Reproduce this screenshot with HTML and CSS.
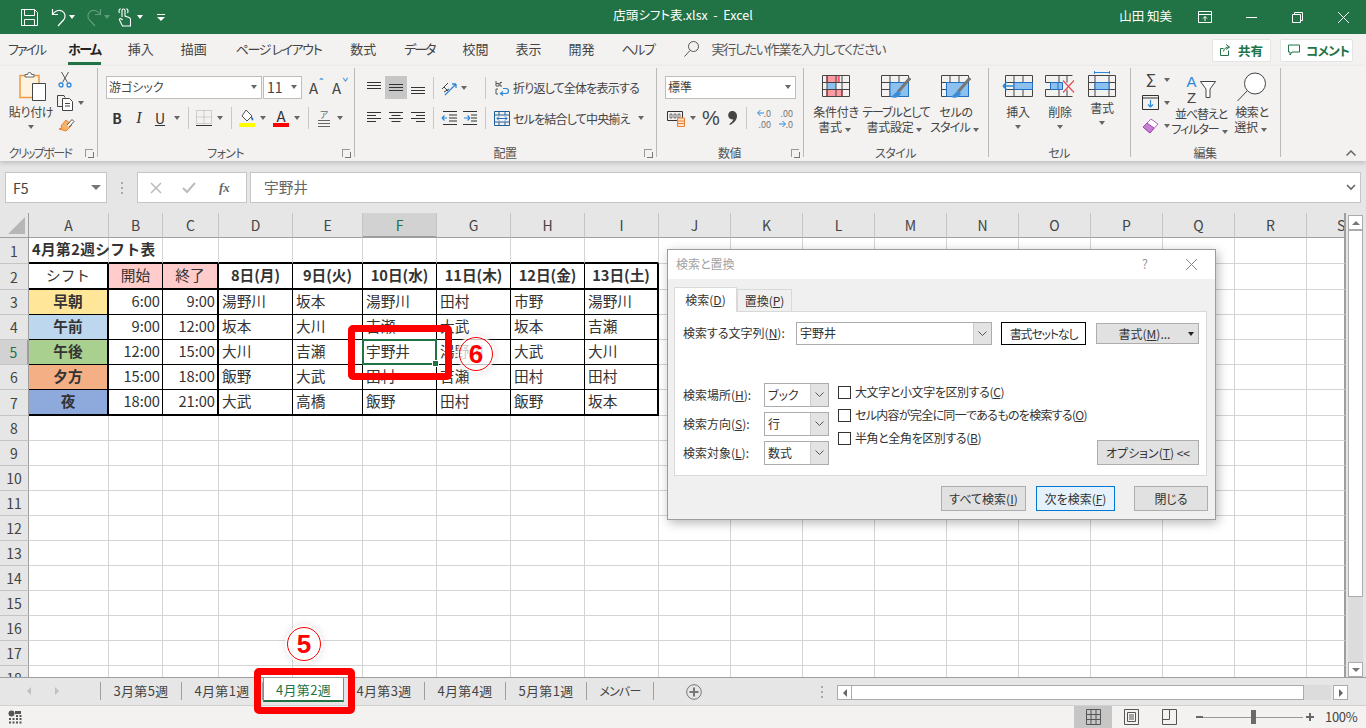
FILE: index.html
```html
<!DOCTYPE html>
<html lang="ja">
<head>
<meta charset="utf-8">
<title>店頭シフト表.xlsx - Excel</title>
<link rel="stylesheet" href="styles.css">
</head>
<body>
<div class="app">

<header class="titlebar">
  <div class="qat">
    <svg class="ic ml-21" width="17" height="18" viewBox="0 0 17 18" fill="none" stroke="#fff"><path d="M.5 1.500h13l3 3v13H.5z"/><path d="M3.500 1.500v6h10v-6M3.500 17.500v-6h10v6"/></svg>
    <svg class="ic ml-13" width="16" height="20" viewBox="0 0 16 20" fill="none" stroke="#fff" stroke-width="1.200"><path d="M1.500 2v5.500H7"/><path d="M1.700 7.300C4 3.700 8 2.500 11 4c3.500 2 4 6 1.500 9L7 19"/></svg>
    <i class="caret white mln-2"></i>
    <svg class="ic ml-7" width="16" height="20" viewBox="0 0 16 20" fill="none" stroke="#5f9c7d" stroke-width="1.200"><path d="M14.500 2v5.500H9"/><path d="M14.300 7.300C12 3.700 8 2.500 5 4c-3.500 2-4 6-1.500 9L9 19"/></svg>
    <i class="caret dim mln-2"></i>
    <svg class="ic ml-4" width="13" height="20" viewBox="0 0 13 20" fill="none" stroke="#fff" stroke-width="1.100"><path d="M4 10V3.500a1.500 1.500 0 0 1 3 0V9l4 1.500c1 .4 1.500 1 1.500 2V19H4.500L1.500 13c-.5-1 1-2 2-1l1 1"/><path d="M1.500 6a3.500 3.500 0 0 1 1-4.500M9.500 6a3.500 3.500 0 0 0-1-4.500"/></svg>
    <i class="caret white ml-2"></i>
    <span class="qat-more ml-10"></span>
  </div>
  <div class="doc-title">店頭シフト表.xlsx&nbsp; - &nbsp;Excel</div>
  <div class="win">
    <span class="user">山田 知美</span>
    <span class="winbtn"><svg width="14" height="12" viewBox="0 0 14 12" fill="none" stroke="#fff"><path d="M.5.500h13v11H.5zM.5 3.500h13M7 10V5.500M5 7.500l2-2 2 2"/></svg></span>
    <span class="winbtn"><svg width="11" height="11" viewBox="0 0 11 11" stroke="#fff"><path d="M0 5.500h11"/></svg></span>
    <span class="winbtn"><svg width="11" height="11" viewBox="0 0 11 11" fill="none" stroke="#fff"><path d="M.5 2.500h8v8h-8zM2.500 2.500v-2h8v8h-2"/></svg></span>
    <span class="winbtn"><svg width="11" height="11" viewBox="0 0 11 11" stroke="#fff"><path d="M0 0l11 11M11 0L0 11"/></svg></span>
  </div>
</header>

<nav class="tabs">
  <span class="kana2 file-t">ファイル</span>
  <span class="tab-on">ホーム</span>
  <span>挿入</span>
  <span>描画</span>
  <span class="page-t">ページ レイアウト</span>
  <span>数式</span>
  <span class="kana2 data-t">データ</span>
  <span>校閲</span>
  <span>表示</span>
  <span>開発</span>
  <span class="kana1">ヘルプ</span>
  <svg class="tell-ic" width="15" height="16" viewBox="0 0 15 16" fill="none" stroke="#555"><circle cx="9.500" cy="5.500" r="5"/><path d="M6 9.500L.5 15.500"/></svg>
  <span class="tell">実行したい作業を入力してください</span>
  <span class="pill pill-share"><svg width="12" height="12" viewBox="0 0 12 12" fill="none" stroke="#217346"><path d="M8.500 6.500v5h-8v-7h3M6 .5l3.500 2.500L6 5.500M9.500 3C6 3 4 4.500 3.500 7.500"/></svg><b>共有</b></span>
  <span class="pill pill-comment"><svg width="12" height="12" viewBox="0 0 12 12" fill="none" stroke="#217346"><path d="M.5 1h11v7H4l-2 3V8H.5z"/></svg><b>コメント</b></span>
</nav>

<section class="ribbon">

  <div class="group g-clip">
    <div class="body row">
      <div class="big w-42 ml-10">
        <svg class="big-ic paste-ic" width="30" height="30" viewBox="0 0 30 30"><path d="M2 3.500h19v22H2z" fill="#fff3e0" stroke="#ed9a3f" stroke-width="1.500"/><path d="M7 5V2.500h2.500a2 2 0 0 1 4 0H16V5z" fill="#fff" stroke="#666"/><path d="M14.500 11.500h13v17h-13z" fill="#fff" stroke="#444"/></svg>
        <span class="lbl">貼り付け</span>
        <i class="caret"></i>
      </div>
      <div class="col-tools">
        <svg class="tool" width="14" height="17" viewBox="0 0 14 17" fill="none"><path d="M3.500 1l6 10.500M10.500 1l-6 10.500" stroke="#555"/><circle cx="3" cy="14" r="2" stroke="#2b88d8" stroke-width="1.300"/><circle cx="11" cy="14" r="2" stroke="#2b88d8" stroke-width="1.300"/></svg>
        <div class="row"><svg width="17" height="16" viewBox="0 0 17 16" fill="none" stroke="#444"><path d="M5 11.500H.5V.5H7l1 2"/><path d="M5.500 3.500h7l3 3v9h-10z" fill="#fff"/><path d="M8 8.500h5M8 11h5"/></svg><i class="caret"></i></div>
        <svg class="tool" width="17" height="16" viewBox="0 0 17 16"><path d="M8 2l6 5-1 1-5 5-7-2 3-1-1-2z" fill="#f5b26b" stroke="#ed7d31"/><path d="M9 7l5-5.500 2 2L11 9" fill="#fff" stroke="#555"/></svg>
      </div>
    </div>
    <div class="glabel clip-l">クリップボード<i class="launch"></i></div>
  </div>

  <div class="group g-font">
    <div class="body">
      <div class="row r1">
        <span class="box w-156">游ゴシック<i class="caret end"></i></span>
        <span class="box w-39 ml-1 size">11<i class="caret end"></i></span>
        <span class="growA ml-7">A<small>ˆ</small></span>
        <span class="growA ml-9">A<small class="blue">ˇ</small></span>
      </div>
      <div class="row r2">
        <b class="fmt w-22">B</b><em class="fmt w-22">I</em><u class="fmt w-20">U</u><i class="caret"></i>
        <i class="sep ml-4"></i>
        <svg class="ml-7" width="16" height="16" viewBox="0 0 16 16" fill="none"><path d="M.5.500h15v13H.5zM8 .5v13M.5 7h15" stroke="#aaa" stroke-dasharray="1 1"/><path d="M0 15.500h16" stroke="#333"/></svg><i class="caret ml-1"></i>
        <i class="sep ml-4"></i>
        <svg class="ml-7" width="16" height="18" viewBox="0 0 16 18"><path d="M7 1l6 6-5 5-5-5z" fill="#fff" stroke="#555"/><path d="M12 7c1.500 1 3 3 2 4.500-1.500 0-2-2-2-4.500z" fill="#1f6fc4"/><rect y="14" width="16" height="4" fill="#ff0"/></svg><i class="caret ml-1"></i>
        <span class="colorA ml-3">A</span><i class="caret ml-1"></i>
        <i class="sep ml-4"></i>
        <span class="phon ml-7">ア<i></i></span><i class="caret ml-1"></i>
      </div>
    </div>
    <div class="glabel">フォント<i class="launch"></i></div>
  </div>

  <div class="group g-align">
    <div class="body">
      <div class="row r1">
        <span class="ab w-22"><svg width="14" height="14" viewBox="0 0 14 14" stroke="#333"><path d="M0 1.500h14M0 4.500h14M0 7.500h14"/></svg></span>
        <span class="ab w-22 on"><svg width="14" height="14" viewBox="0 0 14 14" stroke="#333"><path d="M0 3.500h14M0 6.500h14M0 9.500h14"/></svg></span>
        <span class="ab w-22"><svg width="14" height="14" viewBox="0 0 14 14" stroke="#333"><path d="M0 6.500h14M0 9.500h14M0 12.500h14"/></svg></span>
        <i class="sep ml-4"></i>
        <svg class="ml-7" width="16" height="16" viewBox="0 0 16 16" fill="none"><path d="M1 9l6-6M3 12l5-3M3 7l4 4" stroke="#444"/><path d="M4 15L15 4M15 4h-4M15 4v4" stroke="#2b88d8" stroke-width="1.300"/></svg><i class="caret"></i>
        <i class="sep ml-14"></i>
        <svg class="ml-9" width="16" height="16" viewBox="0 0 16 16" fill="none"><path d="M8 8.500h3a2.500 2.500 0 0 1 0 5H6M8 11.500l-2.500 2 2.500 2" stroke="#2b88d8" stroke-width="1.200"/><path d="M1 1v5M1 3.500h3v2.500H1M7 2.500H5v3.500h2M3 9H1v5h2" stroke="#555"/></svg>
        <span class="lbl ml-2 tight">折り返して全体を表示する</span>
      </div>
      <div class="row r2">
        <span class="ab w-22"><svg width="14" height="12" viewBox="0 0 14 12" stroke="#333"><path d="M0 .5h14M0 3.500h9M0 6.500h14M0 9.500h9"/></svg></span>
        <span class="ab w-22"><svg width="14" height="12" viewBox="0 0 14 12" stroke="#333"><path d="M0 .5h14M2.500 3.500h9M0 6.500h14M2.500 9.500h9"/></svg></span>
        <span class="ab w-22"><svg width="14" height="12" viewBox="0 0 14 12" stroke="#333"><path d="M0 .5h14M5 3.500h9M0 6.500h14M5 9.500h9"/></svg></span>
        <i class="sep ml-4"></i>
        <svg class="ml-7" width="16" height="14" viewBox="0 0 16 14" fill="none"><path d="M2 .5h14M8 4h8M8 7h8M8 10h8M2 13.500h14" stroke="#333"/><path d="M1 7h5M1 7l2.500-2.500M1 7l2.500 2.500" stroke="#2b88d8" stroke-width="1.200"/></svg>
        <svg class="ml-6" width="16" height="14" viewBox="0 0 16 14" fill="none"><path d="M0 .5h14M8 4h6M8 7h6M8 10h6M0 13.500h14" stroke="#333"/><path d="M7 7H1M7 7L4.500 4.500M7 7L4.500 9.500" stroke="#2b88d8" stroke-width="1.200"/></svg>
        <i class="sep ml-6"></i>
        <svg class="ml-8" width="16" height="15" viewBox="0 0 16 15" fill="none"><path d="M.5.500h15v14H.5zM.5 4h15M.5 11h15M5 .5V4M11 .5V4M5 11v3.500M11 11v3.500" stroke="#1f5f99"/><path d="M3 7.500h10M3 7.500l2-2M3 7.500l2 2M13 7.500l-2-2M13 7.500l-2 2" stroke="#1f6fc4"/></svg>
        <span class="lbl ml-3 tight">セルを結合して中央揃え</span><i class="caret ml-4"></i>
      </div>
    </div>
    <div class="glabel">配置<i class="launch"></i></div>
  </div>

  <div class="group g-num">
    <div class="body">
      <div class="row r1"><span class="box w-131">標準<i class="caret end"></i></span></div>
      <div class="row r2">
        <svg class="ml-2" width="19" height="17" viewBox="0 0 19 17" fill="none"><path d="M.5 1.500h15v9H.5z" stroke="#333"/><path d="M3 4h2v4H3zM7 4h2v4H7zM11 4h2v4h-2z" stroke="#555" stroke-width=".8"/><path d="M10.500 8h7v8.500h-7z" fill="#fce4cc" stroke="#ed7d31"/><path d="M10.500 11h7M10.500 13.500h7" stroke="#ed7d31"/></svg><i class="caret"></i>
        <span class="pct ml-2">%</span>
        <svg class="ml-8" width="9" height="14" viewBox="0 0 9 14" fill="#444"><path d="M4 0c3 0 5 2 5 5 0 4-3 7-7 9l-.6-.9C3.500 11.500 5 10 5.300 8.300 2.500 8.800.2 7 .2 4.300.2 1.800 2 0 4 0z"/></svg>
        <i class="sep ml-9"></i>
        <span class="decs ml-8"><svg width="7" height="8" viewBox="0 0 7 8" fill="none" stroke="#2b88d8"><path d="M7 4H1M3.500 1L.5 4l3 3"/></svg><small>.0</small><br><small>.00</small></span>
        <span class="decs ml-6"><small>.00</small><br><svg width="7" height="8" viewBox="0 0 7 8" fill="none" stroke="#2b88d8"><path d="M0 4h6M3.500 1l3 3-3 3"/></svg><small>.0</small></span>
      </div>
    </div>
    <div class="glabel">数値<i class="launch"></i></div>
  </div>

  <div class="group g-style">
    <div class="body row">
      <div class="big w-60">
        <svg class="big-ic" width="28" height="22" viewBox="0 0 28 22" fill="none"><path d="M5 .5h12v7H5zM5 14.500h15v7H5z" fill="#ff9aa2" stroke="#e81123"/><path d="M5 7.500h9v7H5z" fill="#8cc0ee"/><path d="M.5.500h27v21H.5zM.5 7.500h27M.5 14.500h27M5 .5v21M14 .5v21M20 .5v21" stroke="#444"/></svg>
        <span class="lbl">条件付き</span><span class="lbl">書式<i class="caret in"></i></span>
      </div>
      <div class="big w-60">
        <svg class="big-ic" width="30" height="26" viewBox="0 0 30 26" fill="none"><path d="M.5.500h27v21H.5zM.5 7.500h27M.5 14.500h27M9 .5v21M18 .5v21" stroke="#444"/><path d="M9 7.500h18.500v14H9z" fill="#8cc0ee" stroke="#1f6fc4"/><path d="M29 3L17 17" stroke="#777" stroke-width="3"/><path d="M17 16c-3 1-4 4-7 6 4 2 9 0 10-4z" fill="#3c8dd6"/></svg>
        <span class="lbl tighter">テーブルとして</span><span class="lbl">書式設定<i class="caret in"></i></span>
      </div>
      <div class="big w-60">
        <svg class="big-ic" width="30" height="26" viewBox="0 0 30 26" fill="none"><path d="M.5.500h27v21H.5z" stroke="#444"/><path d="M.5 7.500h5M.5 14.500h5M9 .5v7M18 .5v7" stroke="#444"/><path d="M5.500 7.500h22v14h-22z" fill="#8cc0ee" stroke="#1f6fc4"/><path d="M29 3L17 17" stroke="#777" stroke-width="3"/><path d="M17 16c-3 1-4 4-7 6 4 2 9 0 10-4z" fill="#3c8dd6"/></svg>
        <span class="lbl">セルの</span><span class="lbl tight">スタイル<i class="caret in"></i></span>
      </div>
    </div>
    <div class="glabel">スタイル</div>
  </div>

  <div class="group g-cells">
    <div class="body row">
      <div class="big w-42">
        <svg class="big-ic" width="32" height="22" viewBox="0 0 32 22" fill="none"><path d="M3.500.500h27v21h-27zM3.500 7.500h27M3.500 14.500h27M12 .5v21M21 .5v21" stroke="#444"/><path d="M12 7.500h18.500v7H12z" fill="#8cc0ee" stroke="#1f6fc4"/><path d="M1 11h10M1 11l4-4M1 11l4 4" stroke="#2b88d8" stroke-width="1.500"/></svg>
        <span class="lbl">挿入</span><i class="caret"></i>
      </div>
      <div class="big w-42">
        <svg class="big-ic" width="30" height="22" viewBox="0 0 30 22" fill="none"><path d="M.5.500h27M.5 21.500h27M.5.500v7M.5 14.500v7M.5 7.500h5M.5 14.500h5M14 .5v7M14 14.500v7M22 .5v7M22 14.500v7" stroke="#444"/><path d="M5.500 7.500h12v7h-12zM13 7.500v7" fill="#8cc0ee" stroke="#1f6fc4"/><path d="M18 5.500l11 12M29 5.500l-11 12" stroke="#e8505b" stroke-width="1.200"/></svg>
        <span class="lbl">削除</span><i class="caret"></i>
      </div>
      <div class="big w-42">
        <svg class="big-ic fmt-ic" width="28" height="26" viewBox="0 0 28 26" fill="none"><path d="M6.500 1.500h15M6.500 0v3M21.500 0v3" stroke="#2b88d8"/><path d="M.5 4.500h27v21H.5zM.5 11.500h27M.5 18.500h27M7 4.500v21M21 4.500v21" stroke="#444"/><path d="M7 11.500h14v7H7z" fill="#8cc0ee" stroke="#1f6fc4"/></svg>
        <span class="lbl">書式</span><i class="caret"></i>
      </div>
    </div>
    <div class="glabel">セル</div>
  </div>

  <div class="group g-edit">
    <div class="body row">
      <div class="edit-col">
        <div class="row ed"><span class="sigma">Σ</span><i class="caret"></i></div>
        <div class="row ed"><svg width="18" height="15" viewBox="0 0 18 15" fill="none"><path d="M.5.500h16v14H.5zM.5 3h16" stroke="#333"/><path d="M8.500 5v7M6 9.500l2.500 2.500L11 9.500" stroke="#2b88d8" stroke-width="1.200"/></svg><i class="caret"></i></div>
        <div class="row ed"><svg width="18" height="16" viewBox="0 0 18 16"><path d="M1 9l8-8 7 5-8 9z" fill="#fff" stroke="#b565c6"/><path d="M1 9l4-4 7 5-4 5z" fill="#c77fd3" stroke="#a648b5"/></svg><i class="caret"></i></div>
      </div>
      <div class="big w-54">
        <div class="az"><span class="az-l"><b>A</b><b>Z</b></span><svg width="16" height="17" viewBox="0 0 16 17" fill="#fff" stroke="#444"><path d="M.5.500h15L10 8v8.500H6V8z"/></svg></div>
        <span class="lbl tighter">並べ替えと</span><span class="lbl tighter">フィルター<i class="caret in"></i></span>
      </div>
      <div class="big w-48">
        <svg class="big-ic" width="30" height="30" viewBox="0 0 30 30" fill="none" stroke="#444"><circle cx="18" cy="11.500" r="10.500" fill="#fff"/><path d="M10 19L.5 29"/></svg>
        <span class="lbl">検索と</span><span class="lbl">選択<i class="caret in"></i></span>
      </div>
    </div>
    <div class="glabel">編集</div>
  </div>

  <svg class="collapse" width="10" height="6" viewBox="0 0 10 6" fill="none" stroke="#666" stroke-width="1.500"><path d="M.5 5.500L5 1l4.500 4.500"/></svg>
</section>

<section class="fbar">
  <div class="namebox">F5<i class="caret dark"></i></div>
  <span class="vdots"></span>
  <div class="fxbox">
    <svg width="12" height="12" viewBox="0 0 12 12" stroke="#bbb" stroke-width="1.500"><path d="M1 1l10 10M11 1L1 11"/></svg>
    <svg width="14" height="12" viewBox="0 0 14 12" fill="none" stroke="#bbb" stroke-width="2"><path d="M1 6l4 4 8-9"/></svg>
    <em class="fx">fx</em>
  </div>
  <div class="finput"><span class="ftext">宇野井</span><svg class="fexpand" width="10" height="7" viewBox="0 0 10 7" fill="none" stroke="#666" stroke-width="1.600"><path d="M1 1l4 4 4-4"/></svg></div>
</section>

<section class="sheetwrap">
  <div class="sheet-clip">
  <table class="sheet">
    <colgroup>
      <col class="c29"><col class="c80"><col class="c54"><col class="c56"><col class="c74"><col class="c70"><col class="c74"><col class="c74"><col class="c74"><col class="c74"><col class="c72"><col class="c72"><col class="c72"><col class="c72"><col class="c72"><col class="c72"><col class="c72"><col class="c72"><col class="c72"><col class="c39">
    </colgroup>
    <tr class="hrow"><th class="corner"><i></i></th><th>A</th><th>B</th><th>C</th><th>D</th><th>E</th><th class="hsel">F</th><th>G</th><th>H</th><th>I</th><th>J</th><th>K</th><th>L</th><th>M</th><th>N</th><th>O</th><th>P</th><th>Q</th><th>R</th><th class="clip">S</th></tr>
    <tr class="h26"><th>1</th><td class="tt tb"><span class="over">4月第2週シフト表</span></td><td class="tb"></td><td class="tb"></td><td class="tb"></td><td class="tb"></td><td class="tb"></td><td class="tb"></td><td class="tb"></td><td class="tb"></td><td></td><td></td><td></td><td></td><td></td><td></td><td></td><td></td><td></td><td></td></tr>
    <tr class="h26"><th>2</th><td class="ctr k tb tr wide">シフト</td><td class="ctr k tb pink">開始</td><td class="ctr k tb tr pink">終了</td><td class="ctr b tb k">8日(月)</td><td class="ctr b tb k">9日(火)</td><td class="ctr b tb k">10日(水)</td><td class="ctr b tb k">11日(木)</td><td class="ctr b tb k">12日(金)</td><td class="ctr b tb tr">13日(土)</td><td></td><td></td><td></td><td></td><td></td><td></td><td></td><td></td><td></td><td></td></tr>
    <tr><th>3</th><td class="ctr b k tr s1">早朝</td><td class="num k">6:00</td><td class="num k tr">9:00</td><td class="k">湯野川</td><td class="k">坂本</td><td class="k">湯野川</td><td class="k">田村</td><td class="k">市野</td><td class="k tr">湯野川</td><td></td><td></td><td></td><td></td><td></td><td></td><td></td><td></td><td></td><td></td></tr>
    <tr><th>4</th><td class="ctr b k tr s2">午前</td><td class="num k">9:00</td><td class="num k tr">12:00</td><td class="k">坂本</td><td class="k">大川</td><td class="k">吉瀬</td><td class="k">大武</td><td class="k">坂本</td><td class="k tr">吉瀬</td><td></td><td></td><td></td><td></td><td></td><td></td><td></td><td></td><td></td><td></td></tr>
    <tr><th class="hsel-r">5</th><td class="ctr b k tr s3">午後</td><td class="num k">12:00</td><td class="num k tr">15:00</td><td class="k">大川</td><td class="k">吉瀬</td><td class="k selcell">宇野井<span class="sel"><i></i></span></td><td class="k">湯野川</td><td class="k">大武</td><td class="k tr">大川</td><td></td><td></td><td></td><td></td><td></td><td></td><td></td><td></td><td></td><td></td></tr>
    <tr><th>6</th><td class="ctr b k tr s4">夕方</td><td class="num k">15:00</td><td class="num k tr">18:00</td><td class="k">飯野</td><td class="k">大武</td><td class="k">田村</td><td class="k">吉瀬</td><td class="k">田村</td><td class="k tr">田村</td><td></td><td></td><td></td><td></td><td></td><td></td><td></td><td></td><td></td><td></td></tr>
    <tr class="h26"><th>7</th><td class="ctr b tb tr k s5">夜</td><td class="num tb k">18:00</td><td class="num tb tr">21:00</td><td class="tb k">大武</td><td class="tb k">高橋</td><td class="tb k">飯野</td><td class="tb k">田村</td><td class="tb k">飯野</td><td class="tb tr">坂本</td><td></td><td></td><td></td><td></td><td></td><td></td><td></td><td></td><td></td><td></td></tr>
    <tr><th>8</th><td></td><td></td><td></td><td></td><td></td><td></td><td></td><td></td><td></td><td></td><td></td><td></td><td></td><td></td><td></td><td></td><td></td><td></td><td></td></tr>
    <tr><th>9</th><td></td><td></td><td></td><td></td><td></td><td></td><td></td><td></td><td></td><td></td><td></td><td></td><td></td><td></td><td></td><td></td><td></td><td></td><td></td></tr>
    <tr><th>10</th><td></td><td></td><td></td><td></td><td></td><td></td><td></td><td></td><td></td><td></td><td></td><td></td><td></td><td></td><td></td><td></td><td></td><td></td><td></td></tr>
    <tr><th>11</th><td></td><td></td><td></td><td></td><td></td><td></td><td></td><td></td><td></td><td></td><td></td><td></td><td></td><td></td><td></td><td></td><td></td><td></td><td></td></tr>
    <tr><th>12</th><td></td><td></td><td></td><td></td><td></td><td></td><td></td><td></td><td></td><td></td><td></td><td></td><td></td><td></td><td></td><td></td><td></td><td></td><td></td></tr>
    <tr><th>13</th><td></td><td></td><td></td><td></td><td></td><td></td><td></td><td></td><td></td><td></td><td></td><td></td><td></td><td></td><td></td><td></td><td></td><td></td><td></td></tr>
    <tr><th>14</th><td></td><td></td><td></td><td></td><td></td><td></td><td></td><td></td><td></td><td></td><td></td><td></td><td></td><td></td><td></td><td></td><td></td><td></td><td></td></tr>
    <tr><th>15</th><td></td><td></td><td></td><td></td><td></td><td></td><td></td><td></td><td></td><td></td><td></td><td></td><td></td><td></td><td></td><td></td><td></td><td></td><td></td></tr>
    <tr><th>16</th><td></td><td></td><td></td><td></td><td></td><td></td><td></td><td></td><td></td><td></td><td></td><td></td><td></td><td></td><td></td><td></td><td></td><td></td><td></td></tr>
    <tr><th>17</th><td></td><td></td><td></td><td></td><td></td><td></td><td></td><td></td><td></td><td></td><td></td><td></td><td></td><td></td><td></td><td></td><td></td><td></td><td></td></tr>
    <tr><th>18</th><td></td><td></td><td></td><td></td><td></td><td></td><td></td><td></td><td></td><td></td><td></td><td></td><td></td><td></td><td></td><td></td><td></td><td></td><td></td></tr>
  </table>
  </div>
  <div class="vscroll">
    <span class="sbtn"><i class="tri-up"></i></span>
    <span class="vthumb"></span>
    <span class="vtrack"></span>
    <span class="sbtn"><i class="tri-down"></i></span>
  </div>
</section>

<section class="tabbar">
  <div class="nav"><i class="tri-l"></i><i class="tri-r"></i></div>
  <span class="stab">3月第5週</span>
  <span class="stab">4月第1週</span>
  <span class="stab active">4月第2週</span>
  <span class="stab">4月第3週</span>
  <span class="stab">4月第4週</span>
  <span class="stab">5月第1週</span>
  <span class="stab w-67">メンバー</span>
  <svg class="addsheet" width="16" height="16" viewBox="0 0 16 16" fill="none" stroke="#777"><circle cx="8" cy="8" r="7.300"/><path d="M8 3.500v9M3.500 8h9" stroke-width="2"/></svg>
  <span class="vdots hd"></span>
  <div class="hscroll">
    <span class="sbtn-h"><i class="tri-l dk"></i></span>
    <span class="hthumb"></span>
    <span class="htrack"></span>
    <span class="sbtn-h"><i class="tri-r dk"></i></span>
  </div>
</section>

<footer class="status">
  <svg class="macro" width="14" height="14" viewBox="0 0 14 14"><circle cx="3.500" cy="3.500" r="3" fill="#555"/><path d="M7 1h6v3H7z" fill="#555"/><path d="M1 8h2v2H1zM4.500 8h2v2h-2zM8 8h2v2H8zM11.500 8h2v2h-2zM1 11.500h2v2H1zM4.500 11.500h2v2h-2zM8 11.500h2v2H8zM11.500 11.500h2v2h-2zM8 5h2v2H8zM11.500 5h2v2h-2z" fill="#555"/></svg>
  <div class="views">
    <span class="vbtn on"><svg width="15" height="16" viewBox="0 0 15 16" fill="none" stroke="#555"><path d="M.5.500h14v15H.5zM5 .5v15M10 .5v15M.5 5.500h14M.5 10.500h14"/></svg></span>
    <span class="vbtn"><svg width="15" height="16" viewBox="0 0 15 16" fill="none" stroke="#555"><path d="M.5.500h14v15H.5zM3.500 3.500h8v9h-8zM5 6h5M5 8h5M5 10h5"/></svg></span>
    <span class="vbtn"><svg width="15" height="16" viewBox="0 0 15 16" fill="none" stroke="#555"><path d="M.5.500h14v15H.5zM.5 10.500h7V.5"/></svg></span>
  </div>
  <div class="zoom">
    <i class="zminus"></i>
    <span class="ztrack"><i class="zthumb"></i></span>
    <i class="zplus"></i>
    <span class="zpct">100%</span>
  </div>
</footer>

<div class="dialog">
  <div class="d-title"><span>検索と置換</span><span class="d-help">?</span><svg class="d-close" width="11" height="11" viewBox="0 0 11 11" stroke="#888"><path d="M0 0l11 11M11 0L0 11"/></svg></div>
  <div class="d-tabs">
    <span class="d-tab on">検索(<u>D</u>)</span>
    <span class="d-tab">置換(<u>P</u>)</span>
  </div>
  <div class="d-panel">
    <div class="row d-find">
      <label class="l-113">検索する文字列(<u>N</u>):</label>
      <span class="combo w-196"><span class="combo-t">宇野井</span><i class="combo-a"><svg width="9" height="6" viewBox="0 0 9 6" fill="none" stroke="#555"><path d="M.5.500l4 4 4-4"/></svg></i></span>
      <span class="nofmt ml-9">書式セットなし</span>
      <span class="btn fmtbtn ml-10">書式(<u>M</u>)...<i class="caret black"></i></span>
    </div>
    <div class="row d-opts">
      <div class="d-sels">
        <div class="row d-sel"><label class="l-81">検索場所(<u>H</u>):</label><span class="combo w-65"><span class="combo-t">ブック</span><i class="combo-a"><svg width="9" height="6" viewBox="0 0 9 6" fill="none" stroke="#555"><path d="M.5.500l4 4 4-4"/></svg></i></span></div>
        <div class="row d-sel"><label class="l-81">検索方向(<u>S</u>):</label><span class="combo w-65"><span class="combo-t">行</span><i class="combo-a"><svg width="9" height="6" viewBox="0 0 9 6" fill="none" stroke="#555"><path d="M.5.500l4 4 4-4"/></svg></i></span></div>
        <div class="row d-sel"><label class="l-81">検索対象(<u>L</u>):</label><span class="combo w-65"><span class="combo-t">数式</span><i class="combo-a"><svg width="9" height="6" viewBox="0 0 9 6" fill="none" stroke="#555"><path d="M.5.500l4 4 4-4"/></svg></i></span></div>
      </div>
      <div class="d-checks">
        <div class="row chk"><i class="cb"></i><span class="chk-t c1">大文字と小文字を区別する(<u>C</u>)</span></div>
        <div class="row chk"><i class="cb"></i><span class="chk-t c2">セル内容が完全に同一であるものを検索する(<u>O</u>)</span></div>
        <div class="row chk"><i class="cb"></i><span class="chk-t c1">半角と全角を区別する(<u>B</u>)</span></div>
      </div>
      <span class="btn optbtn">オプション(<u>T</u>) &lt;&lt;</span>
    </div>
  </div>
  <div class="row d-actions">
    <span class="btn w-85">すべて検索(<u>I</u>)</span>
    <span class="btn w-79 primary">次を検索(<u>F</u>)</span>
    <span class="btn w-74">閉じる</span>
  </div>
</div>

<div class="redbox rb-cell"></div>
<div class="redbox rb-tab"></div>
<div class="mark mk-6">6</div>
<div class="mark mk-5">5</div>

</div>
</body>
</html>
```
FILE: styles.css
```css
* { box-sizing: border-box; }
html, body { margin: 0; padding: 0; }
body { font-family: "Noto Sans CJK JP", "Noto Sans", sans-serif; font-feature-settings: "palt" 1; color: #444; font-size: 12px; }
i, em { font-style: normal; }
.app { position: relative; width: 1366px; height: 728px; overflow: hidden; background: #e6e6e6; display: flex; flex-direction: column; }
.row { display: flex; align-items: center; }
svg { display: block; flex: none; }

.ml-1 { margin-left: 1px; } .ml-2 { margin-left: 2px; } .ml-3 { margin-left: 3px; } .ml-4 { margin-left: 4px; }
.ml-5 { margin-left: 5px; } .ml-6 { margin-left: 6px; } .ml-7 { margin-left: 7px; } .ml-8 { margin-left: 8px; }
.ml-9 { margin-left: 9px; } .ml-10 { margin-left: 10px; } .ml-13 { margin-left: 13px; } .ml-14 { margin-left: 14px; } .ml-21 { margin-left: 21px; }
.mln-2 { margin-left: -2px; }
.w-20 { width: 20px; } .w-22 { width: 22px; } .w-39 { width: 39px; } .w-42 { width: 42px; } .w-48 { width: 48px; } .w-52 { width: 52px; }
.w-54 { width: 54px; } .w-60 { width: 60px; } .w-65 { width: 65px; } .w-74 { width: 74px; } .w-79 { width: 79px; } .w-85 { width: 85px; }
.w-131 { width: 131px; } .w-156 { width: 156px; } .w-196 { width: 196px; }

/* caret */
.caret { display: inline-flex; flex: none; width: 14px; height: 10px; align-items: center; justify-content: center; letter-spacing: 0; }
.caret::before { content: ""; border-left: 3.5px solid transparent; border-right: 3.5px solid transparent; border-top: 4px solid #666; }
.caret.white::before { border-top-color: #fff; }
.caret.dim::before { border-top-color: #5f9c7d; }
.caret.dark::before { border-left-width: 5px; border-right-width: 5px; border-top-width: 5px; border-top-color: #777; }
.caret.black::before { border-top-color: #222; }
.caret.end { margin-left: auto; }
.caret.in { width: 12px; height: 8px; }

/* title bar */
.titlebar { height: 34px; flex: none; background: #217346; color: #fff; display: grid; grid-template-columns: 1fr auto 1fr; align-items: center; }
.qat { display: flex; align-items: center; }
.qat-more { display: block; width: 8px; height: 7px; border-top: 1px solid #fff; position: relative; }
.qat-more::after { content: ""; position: absolute; left: 0; top: 2px; border-left: 4px solid transparent; border-right: 4px solid transparent; border-top: 4px solid #fff; }
.doc-title { font-size: 12.500px; white-space: pre; padding-bottom: 5px; }
.win { display: flex; justify-content: flex-end; align-items: center; }
.user { font-size: 12.500px; margin-right: 10px; padding-bottom: 3px; }
.winbtn { width: 46px; height: 34px; display: flex; align-items: center; justify-content: center; }

/* tab strip */
.tabs { height: 32px; flex: none; background: #f3f2f1; display: flex; align-items: center; gap: 27px; padding-left: 8px; font-size: 13px; color: #444; }
.tabs > span { line-height: 20px; padding-bottom: 3px; }
.tabs > span.pill { padding-bottom: 0; line-height: normal; }
.kana2 { letter-spacing: -2px; }
.kana1 { letter-spacing: -1.500px; }
.file-t { margin-right: -4px; }
.data-t { margin-left: 1px; margin-right: 1px; }
.page-t { letter-spacing: -1.400px; margin-left: 2px; margin-right: 2px; }
.tab-on { font-weight: 700; color: #222; position: relative; letter-spacing: -1.500px; }
.tab-on::after { content: ""; position: absolute; left: 0; right: 0; bottom: -3px; height: 3px; background: #217346; }
.tell-ic { margin-left: 3px; margin-bottom: 3px; }
.tell { margin-left: -15px; color: #555; letter-spacing: -1.250px; }
.pill { height: 23px; background: #fff; border: 1px solid #e4e4e4; border-radius: 2px; display: flex; align-items: center; gap: 6px; padding-left: 7px; color: #217346; font-size: 12.500px; }
.pill-share { margin-left: auto; width: 59px; margin-right: -18px; }
.pill-comment { width: 73px; margin-right: 13px; letter-spacing: -.5px; }

/* ribbon */
.ribbon { height: 95px; flex: none; background: #f3f2f1; display: flex; align-items: flex-start; position: relative; box-shadow: 0 2px 5px rgba(0,0,0,.18); z-index: 2; }
.group { height: 89px; margin-top: 2px; border-right: 1px solid #b9b9b9; position: relative; flex: none; }
.g-clip { width: 98px; } .g-font { width: 257px; } .g-align { width: 302px; } .g-num { width: 147px; } .g-style { width: 185px; } .g-cells { width: 142px; } .g-edit { width: 150px; }
.body { height: 76px; }
.body.row { align-items: flex-start; }
.g-font .body, .g-num .body { padding-left: 8px; }
.g-align .body { padding-left: 8px; }
.g-style .body { padding-left: 2px; }
.g-cells .body { padding-left: 8px; }
.glabel { height: 17px; line-height: 17px; text-align: center; position: relative; color: #555; margin-right: 1px; letter-spacing: -.6px; }
.clip-l { padding-right: 16px; letter-spacing: -1.600px; }
.launch { position: absolute; right: 3px; top: 5px; width: 8px; height: 8px; border-left: 1px solid #999; border-top: 1px solid #999; }
.launch::after { content: ""; position: absolute; right: -1px; bottom: -1px; width: 5px; height: 5px; border-right: 1px solid #777; border-bottom: 1px solid #777; }
.r1 { height: 31px; padding-top: 8px; }
.r2 { height: 22px; margin-top: 8px; }
.lbl { line-height: 15px; white-space: nowrap; color: #444; letter-spacing: -.3px; }
.lbl.tight { letter-spacing: -.8px; }
.lbl.tighter { letter-spacing: -1.100px; }
.box { height: 23px; background: #fff; border: 1px solid #bdbdbd; display: flex; align-items: center; padding-left: 2px; flex: none; color: #444; font-size: 12px; line-height: 18px; padding-bottom: 1px; }
.box.size { font-size: 14px; padding-left: 3px; }
.box .caret { width: 15px; }
.growA { width: 14px; font-size: 15px; position: relative; color: #444; }
.growA small { position: absolute; left: 10px; top: -3px; font-size: 11px; color: #2b88d8; }
.fmt { display: block; text-align: center; font-size: 14px; color: #333; flex: none; }
em.fmt { font-family: "Liberation Serif", serif; font-style: italic; font-size: 16px; }
u.fmt { font-size: 14px; }
.sep { display: block; width: 1px; height: 22px; background: #c8c8c8; flex: none; }
.colorA { display: block; width: 16px; height: 18px; text-align: center; font-size: 15px; line-height: 14px; color: #333; border-bottom: 4px solid #f00; flex: none; }
.phon { display: block; width: 16px; text-align: center; font-size: 9px; line-height: 10px; color: #666; }
.phon i { display: block; height: 7px; margin: 0 2px; background: repeating-linear-gradient(#666 0 1px, transparent 1px 3px); }
.ab { height: 23px; display: flex; align-items: center; justify-content: center; flex: none; }
.ab.on { background: #c6c6c6; }
.pct { width: 18px; font-size: 20px; line-height: 20px; text-align: center; color: #444; font-family: "Liberation Sans", sans-serif; }
.decs { width: 16px; display: block; line-height: 9px; text-align: right; white-space: nowrap; }
.decs svg { display: inline-block; }
.decs small { font-size: 9px; color: #777; }

/* big buttons */
.big { display: flex; flex-direction: column; align-items: center; flex: none; }
.big-ic { margin-top: 7px; margin-bottom: 7px; }
.big-ic[height="26"] { margin-bottom: 3px; }
.big-ic[height="30"] { margin-top: 4px; margin-bottom: 2px; }
.fmt-ic { margin-top: 3px; margin-bottom: 7px; }
.big > .caret { height: 15px; }
.paste-ic { margin-left: 4px; margin-top: 8px; margin-bottom: 6px; }
.col-tools { width: 40px; margin-left: 5px; display: flex; flex-direction: column; gap: 7px; padding-top: 3px; }
.col-tools .caret { width: 13px; }
.tool { margin-left: 1px; }
.edit-col { padding-left: 11px; width: 43px; flex: none; }
.ed { height: 23px; }
.sigma { width: 18px; text-align: center; font-size: 17px; line-height: 20px; color: #444; }
.az { height: 33px; display: flex; align-items: center; gap: 3px; margin-top: 5px; }
.az-l { display: flex; flex-direction: column; font: 15px/16px "Liberation Sans", sans-serif; width: 11px; text-align: center; }
.az-l b { font-weight: 400; color: #444; }
.az-l b:first-child { color: #2b88d8; }
.collapse { position: absolute; right: 10px; top: 84px; }

/* formula bar */
.fbar { height: 52px; flex: none; display: flex; align-items: flex-start; padding-top: 11px; padding-left: 5px; background: #e6e6e6; }
.namebox { width: 102px; height: 31px; background: #fff; border: 1px solid #c6c6c6; display: flex; align-items: center; padding-left: 7px; font-size: 14px; color: #444; justify-content: space-between; }
.namebox .caret { width: 20px; }
.vdots { width: 2px; height: 12px; margin: 10px 14px 0 14px; background: repeating-linear-gradient(#aaa 0 2px, transparent 2px 5px); flex: none; }
.fxbox { width: 110px; height: 31px; background: #fff; border: 1px solid #c6c6c6; display: flex; align-items: center; padding-left: 12px; gap: 20px; }
.fx { font-family: "Liberation Serif", serif; font-style: italic; font-weight: 700; font-size: 13px; color: #666; margin-left: 3px; }
.finput { width: 1111px; height: 31px; margin-left: 3px; background: #fff; border: 1px solid #c6c6c6; display: flex; align-items: center; padding-left: 13px; font-size: 14.670px; color: #666; }
.ftext { padding-bottom: 3px; letter-spacing: 0; font-feature-settings: normal; }
.fexpand { margin-left: auto; margin-right: 4px; }

/* sheet */
.sheetwrap { height: 465px; flex: none; display: flex; background: #e6e6e6; border-bottom: 1px solid #9e9e9e; }
.sheet-clip { width: 1346px; height: 464px; overflow: hidden; flex: none; }
.sheet { table-layout: fixed; border-collapse: separate; border-spacing: 0; width: 1346px; font-size: 14.670px; color: #333; font-feature-settings: normal; }
.c29 { width: 29px; } .c80 { width: 80px; } .c54 { width: 54px; } .c56 { width: 56px; } .c74 { width: 74px; } .c70 { width: 70px; } .c72 { width: 72px; } .c39 { width: 39px; }
.sheet tr { height: 25px; }
.sheet tr.h26 { height: 26px; }
.sheet th { background: #e6e6e6; font-weight: 400; font-size: 14px; color: #444; padding: 0; border-right: 1px solid #c4c4c4; border-bottom: 1px solid #c4c4c4; text-align: center; }
.sheet tr:first-child th { border-bottom-color: #9e9e9e; }
.sheet tr th:first-child { border-right-color: #9e9e9e; }
.sheet th.hsel { background: #d2d2d2; border-bottom: 2px solid #217346; color: #217346; }
.sheet th.hsel-r { background: #d2d2d2; color: #217346; border-right: 2px solid #217346; }
.sheet th.clip { text-align: left; overflow: hidden; white-space: nowrap; text-indent: 30px; border-right: 2px solid #9e9e9e; }
.corner { position: relative; }
.corner i { position: absolute; right: 3px; bottom: 3px; border-left: 17px solid transparent; border-bottom: 17px solid #b6b6b6; }
.sheet td { background: #fff; padding: 0 3px 2px; border-right: 1px solid #d4d4d4; border-bottom: 1px solid #d4d4d4; white-space: nowrap; line-height: 20px; overflow: hidden; }
.sheet td:last-child { border-right: 2px solid #9e9e9e; }
.sheet td.k { border-right-color: #000; border-bottom-color: #000; }
.sheet td.tb { border-bottom: 2px solid #000; }
.sheet td.tr { border-right: 2px solid #000; }
.ctr { text-align: center; }
.b { font-weight: 700; }
.wide { font-weight: 400; }
.sheet td.num { text-align: right; padding-right: 2px; }
.sheet td.tt { font-weight: 700; overflow: visible; position: relative; z-index: 1; }
.over { display: block; width: 130px; letter-spacing: .4px; }
.sheet td.pink { background: #ffcccc; }
.sheet td.s1 { background: #ffe699; } .sheet td.s2 { background: #bdd7ee; } .sheet td.s3 { background: #a9d08e; } .sheet td.s4 { background: #f4b084; } .sheet td.s5 { background: #8ea9db; }
.sheet td.selcell { position: relative; overflow: visible; }
.sel { position: absolute; left: -1px; top: -1px; right: -1px; bottom: -1px; border: 2px solid #217346; }
.sel i { position: absolute; right: -4px; bottom: -4px; width: 7px; height: 7px; background: #217346; border: 1px solid #fff; }
.vscroll { flex: 1; padding: 2px 3px 0 2px; display: flex; flex-direction: column; }
.sbtn { height: 15px; flex: none; background: #fff; border: 1px solid #ababab; display: flex; align-items: center; justify-content: center; }
.vthumb { height: 367px; flex: none; background: #fff; border: 1px solid #ababab; }
.vtrack { flex: 1; background: #dcdcdc; }
.tri-up { border-left: 4px solid transparent; border-right: 4px solid transparent; border-bottom: 4px solid #777; }
.tri-down { border-left: 4px solid transparent; border-right: 4px solid transparent; border-top: 4px solid #777; }

/* tabs at the bottom */
.tabbar { height: 28px; flex: none; background: #e6e6e6; display: flex; align-items: stretch; border-bottom: 1px solid #d0d0d0; }
.nav { width: 101px; display: flex; align-items: center; padding-left: 27px; gap: 24px; border-right: 1px solid #9e9e9e; margin: 4px 0 5px; }
.tri-l { display: block; border-top: 4px solid transparent; border-bottom: 4px solid transparent; border-right: 4px solid #c0c0c0; }
.tri-r { display: block; border-top: 4px solid transparent; border-bottom: 4px solid transparent; border-left: 4px solid #c0c0c0; }
.tri-l.dk { border-right-color: #666; } .tri-r.dk { border-left-color: #666; }
.stab { width: 81px; flex: none; display: flex; align-items: center; justify-content: center; font-size: 13px; color: #444; border-right: 1px solid #9e9e9e; margin: 4px 0 5px; padding-bottom: 2px; letter-spacing: .3px; }
.stab.w-67 { width: 67px; font-size: 12px; letter-spacing: -.8px; }
.stab.active { margin: 0; height: 24px; background: #fff; color: #217346; border-left: 1px solid #8a8a8a; border-right: 1px solid #8a8a8a; border-bottom: 2px solid #217346; padding-bottom: 0; }
.addsheet { margin: 6px 0 0 32px; }
.vdots.hd { margin: 8px 0 0 119px; }
.hscroll { margin-left: 14px; width: 512px; height: 15px; margin-top: 7px; display: flex; flex: none; }
.sbtn-h { width: 15px; background: #fff; border: 1px solid #ababab; display: flex; align-items: center; justify-content: center; flex: none; }
.hthumb { width: 453px; background: #fff; border: 1px solid #ababab; margin-left: -1px; flex: none; }
.htrack { width: 27px; background: #dcdcdc; flex: none; margin-right: 2px; }

/* status */
.status { height: 22px; flex: 1; background: #f3f2f1; display: flex; align-items: center; padding-left: 8px; }
.views { margin-left: auto; display: flex; height: 100%; }
.vbtn { width: 38px; height: 100%; display: flex; align-items: center; justify-content: center; }
.vbtn.on { background: #c6c6c6; }
.zoom { display: flex; align-items: center; margin-left: 8px; margin-right: 8px; }
.zminus { width: 7px; height: 2px; background: #666; }
.ztrack { width: 100px; height: 1px; background: #999; position: relative; display: block; }
.zthumb { position: absolute; left: 48px; top: -7px; width: 5px; height: 14px; background: #6a6a6a; }
.zplus { width: 8px; height: 8px; margin-left: 3px; background: linear-gradient(#666,#666) center/8px 2px no-repeat, linear-gradient(#666,#666) center/2px 8px no-repeat; }
.zpct { margin-left: 11px; width: 33px; font-size: 13px; color: #444; white-space: nowrap; padding-bottom: 1px; letter-spacing: -.3px; }

/* dialog */
.dialog { position: absolute; left: 667px; top: 249px; width: 549px; height: 271px; background: #f0f0f0; border: 1px solid #9c9c9c; box-shadow: 2px 3px 10px rgba(0,0,0,.28); z-index: 5; color: #333; }
.d-title { height: 29px; background: #fff; display: flex; align-items: center; padding-left: 8px; color: #a2a2a2; position: relative; }
.d-title span:first-child { padding-bottom: 3px; }
.d-help { margin-left: auto; margin-right: 38px; color: #999; font-size: 13px; padding-bottom: 3px; }
.d-close { margin-right: 18px; }
.d-tabs { margin-top: 8px; padding-left: 6px; height: 24px; display: flex; align-items: flex-end; position: relative; z-index: 1; }
.d-tab { height: 22px; width: 55px; border: 1px solid #d9d9d9; border-bottom: 0; display: flex; align-items: center; justify-content: center; padding-bottom: 1px; }
.d-tab.on { width: 63px; background: #fff; margin-bottom: -1px; height: 25px; padding-bottom: 2px; }
.d-panel { margin: 0 8px 0 6px; height: 165px; background: #fff; border: 1px solid #d9d9d9; padding: 10px 7px 0 8px; }
.d-find { height: 23px; }
.l-113 { width: 113px; flex: none; white-space: nowrap; padding-bottom: 2px; }
.l-81 { width: 81px; flex: none; white-space: nowrap; padding-bottom: 2px; }
.combo { height: 100%; background: #fff; border: 1px solid #acacac; display: flex; align-items: center; flex: none; }
.combo-t { flex: 1; padding-left: 3px; padding-bottom: 2px; color: #333; }
.combo-a { width: 18px; height: 100%; background: #e3e3e3; border-left: 1px solid #ccc; display: flex; align-items: center; justify-content: center; flex: none; }
.nofmt { width: 85px; height: 100%; background: #fff; border: 1px solid #000; display: flex; align-items: center; justify-content: center; flex: none; white-space: nowrap; letter-spacing: -1.200px; padding-bottom: 1px; }
.btn { height: 100%; background: #e1e1e1; border: 1px solid #adadad; display: flex; align-items: center; justify-content: center; flex: none; white-space: nowrap; color: #333; padding-bottom: 1px; }
.fmtbtn { width: 103px; height: 21px; position: relative; padding-right: 6px; }
.fmtbtn .caret { position: absolute; right: 0; top: 5px; }
.d-opts { margin-top: 38px; height: 84px; align-items: flex-start; }
.d-sels { width: 146px; flex: none; }
.d-sel { height: 24px; margin-bottom: 5px; }
.d-checks { margin-left: 9px; margin-top: -2px; width: 259px; flex: none; white-space: nowrap; }
.chk { height: 23px; }
.chk-t { padding-bottom: 2px; }
.c1 { letter-spacing: -.4px; }
.c2 { letter-spacing: -.7px; }
.cb { width: 13px; height: 13px; border: 1px solid #333; background: #fff; margin-right: 4px; flex: none; }
.optbtn { width: 102px; height: 25px; margin-top: 57px; }
.d-actions { height: 25px; margin-top: 10px; padding-left: 273px; }
.d-actions .btn:nth-child(2) { margin-left: 10px; }
.d-actions .btn:nth-child(3) { margin-left: 19px; }
.btn.primary { border: 1px solid #0078d7; background: #e5f1fb; }

/* annotations */
.redbox { position: absolute; border: 7px solid #f00; border-radius: 5px; z-index: 6; }
.rb-cell { left: 348px; top: 325px; width: 104px; height: 55px; }
.rb-tab { left: 254px; top: 668px; width: 101px; height: 46px; }
.mark { position: absolute; width: 34px; height: 34px; border-radius: 50%; background: rgba(255,255,255,.75); border: 1px solid #f00; color: #f00; font: 700 26px/32px "Liberation Sans", sans-serif; text-align: center; z-index: 7; box-shadow: 0 0 2px 2px rgba(255,255,255,.95), 0 0 6px 3px rgba(120,120,120,.18); }
.mk-6 { left: 459px; top: 337px; }
.mk-5 { left: 287px; top: 627px; }
```
